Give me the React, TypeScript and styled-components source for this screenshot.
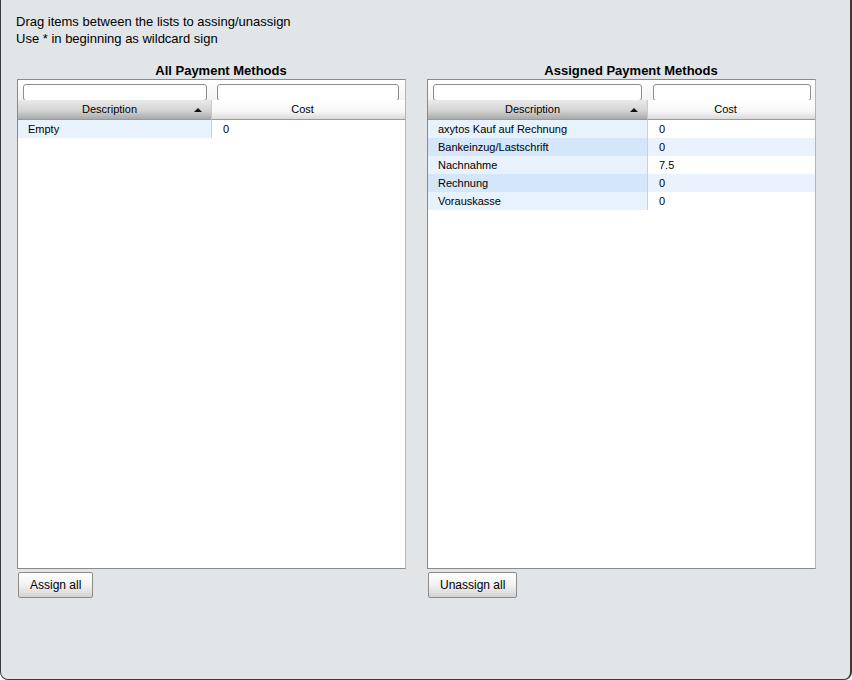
import styled, { createGlobalStyle } from "styled-components";

const GlobalStyle = createGlobalStyle`
  html, body {
    margin: 0;
    padding: 0;
    background: #ffffff;
  }
  body {
    font-family: "Liberation Sans", Arial, Helvetica, sans-serif;
    color: #000;
  }
`;

const Panel = styled.div`
  box-sizing: border-box;
  width: 852px;
  height: 680px;
  background: #e1e5e8;
  border-left: 1px solid #3a3a3a;
  border-right: 2px solid #3a3a3a;
  border-bottom: 1px solid #3a3a3a;
  border-bottom-left-radius: 8px;
  border-bottom-right-radius: 8px;
  padding: 13px 0 0 15px;
`;

const Hint = styled.div`
  font-size: 13px;
  line-height: 17px;
  margin-bottom: 16px;
`;

const Lists = styled.div`
  display: flex;
  gap: 21px;
  padding-left: 1px;
`;

const ListBox = styled.div`
  display: flex;
  flex-direction: column;
  width: 389px;
`;

const ListTitle = styled.div`
  font-size: 13px;
  font-weight: bold;
  text-align: center;
  line-height: 15px;
  height: 16px;
  padding-left: 19px;
`;

const Grid = styled.div`
  box-sizing: border-box;
  height: 490px;
  background: #fff;
  border: 1px solid #8a8a8a;
  border-right-color: #b4b4b4;
  display: flex;
  flex-direction: column;
`;

const Row = styled.div<{ $cols: string }>`
  display: grid;
  grid-template-columns: ${({ $cols }) => $cols};
`;

const FilterCell = styled.div<{ $padRight: number }>`
  height: 20px;
  box-sizing: border-box;
  padding: 2px ${({ $padRight }) => $padRight}px 0 5px;
  background: linear-gradient(#ffffff, #f3f3f3);
`;

const FilterInput = styled.input`
  box-sizing: border-box;
  width: 100%;
  height: 17px;
  margin: 0;
  border: 1px solid #8e8e8e;
  border-radius: 3px;
  background: #fff;
  padding: 0 3px;
  font-size: 11px;
  font-family: inherit;
`;

const HeaderCell = styled.div<{ $sorted?: boolean }>`
  position: relative;
  box-sizing: border-box;
  height: 20px;
  line-height: 19px;
  font-size: 11px;
  text-align: center;
  border-bottom: 1px solid #9a9a9a;
  padding-right: ${({ $sorted }) => ($sorted ? "10px" : "12px")};
  background: ${({ $sorted }) =>
    $sorted
      ? "linear-gradient(#eaeaea, #d4d4d4 55%, #a9a9a9)"
      : "linear-gradient(#ffffff, #f7f7f7 60%, #dadada)"};
  border-right: ${({ $sorted }) => ($sorted ? "1px solid #c8c8c8" : "none")};
`;

const SortArrow = styled.span`
  position: absolute;
  right: 9px;
  top: 8px;
  width: 0;
  height: 0;
  border-left: 4px solid transparent;
  border-right: 4px solid transparent;
  border-bottom: 4px solid #111;
`;

const Cell = styled.div<{ $bg: string; $first?: boolean }>`
  box-sizing: border-box;
  height: 18px;
  line-height: 18px;
  font-size: 11px;
  padding-left: ${({ $first }) => ($first ? "10px" : "11px")};
  background: ${({ $bg }) => $bg};
  border-right: ${({ $first }) => ($first ? "1px solid #d0d0d0" : "none")};
  white-space: nowrap;
  overflow: hidden;
`;

const ButtonRow = styled.div`
  padding-top: 3px;
`;

const ActionButton = styled.button`
  height: 26px;
  padding: 0 11px;
  font-family: "Liberation Sans", Arial, sans-serif;
  font-size: 12px;
  color: #000;
  border: 1px solid #8c8c8c;
  border-radius: 2px;
  background: linear-gradient(#ffffff, #f2f2f2 50%, #d3d3d3);
  margin-left: 1px;
`;

interface Item {
  description: string;
  cost: string;
}

interface ListProps {
  title: string;
  cols: string;
  filterPads: [number, number];
  items: Item[];
  buttonLabel: string;
}

const descBg = ["#e8f2fc", "#d4e6fa"];
const costBg = ["#ffffff", "#eaf3fd"];

function PaymentList({ title, cols, filterPads, items, buttonLabel }: ListProps) {
  return (
    <ListBox>
      <ListTitle>{title}</ListTitle>
      <Grid>
        <Row $cols={cols}>
          <FilterCell $padRight={filterPads[0]}>
            <FilterInput />
          </FilterCell>
          <FilterCell $padRight={filterPads[1]}>
            <FilterInput />
          </FilterCell>
        </Row>
        <Row $cols={cols}>
          <HeaderCell $sorted>
            Description
            <SortArrow />
          </HeaderCell>
          <HeaderCell>Cost</HeaderCell>
        </Row>
        {items.map((item, i) => (
          <Row $cols={cols} key={item.description}>
            <Cell $first $bg={descBg[i % 2]}>
              {item.description}
            </Cell>
            <Cell $bg={costBg[i % 2]}>{item.cost}</Cell>
          </Row>
        ))}
      </Grid>
      <ButtonRow>
        <ActionButton>{buttonLabel}</ActionButton>
      </ButtonRow>
    </ListBox>
  );
}

export default function App() {
  return (
    <>
      <GlobalStyle />
      <Panel>
        <Hint>
          Drag items between the lists to assing/unassign
          <br />
          Use * in beginning as wildcard sign
        </Hint>
        <Lists>
          <PaymentList
            title="All Payment Methods"
            cols="194px 193px"
            filterPads={[5, 6]}
            items={[{ description: "Empty", cost: "0" }]}
            buttonLabel="Assign all"
          />
          <PaymentList
            title="Assigned Payment Methods"
            cols="220px 167px"
            filterPads={[6, 4]}
            items={[
              { description: "axytos Kauf auf Rechnung", cost: "0" },
              { description: "Bankeinzug/Lastschrift", cost: "0" },
              { description: "Nachnahme", cost: "7.5" },
              { description: "Rechnung", cost: "0" },
              { description: "Vorauskasse", cost: "0" },
            ]}
            buttonLabel="Unassign all"
          />
        </Lists>
      </Panel>
    </>
  );
}
